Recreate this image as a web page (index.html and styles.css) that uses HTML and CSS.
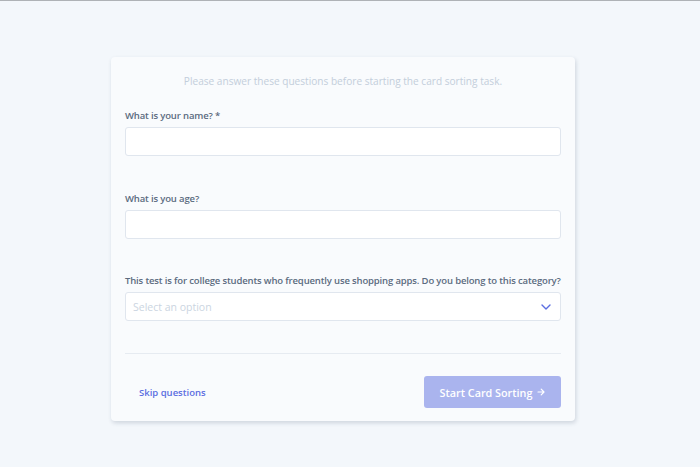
FILE: index.html
```html
<!DOCTYPE html>
<html>
<head>
<meta charset="utf-8">
<link rel="stylesheet" href="styles.css">
</head>
<body>
<div class="topline"></div>
<main class="page">
  <section class="card">
    <p class="intro">Please answer these questions before starting the card sorting task.</p>
    <div class="field">
      <label class="label">What is your name? *</label>
      <div class="input"></div>
    </div>
    <div class="field field-mid">
      <label class="label">What is you age?</label>
      <div class="input"></div>
    </div>
    <div class="field field-last">
      <label class="label">This test is for college students who frequently use shopping apps. Do you belong to this category?</label>
      <div class="input select">
        <span class="placeholder">Select an option</span>
        <svg class="chev" width="10" height="6" viewBox="0 0 10 6"><path d="M1 1l4 4 4-4" fill="none" stroke="#5b6ee1" stroke-width="1.4" stroke-linecap="round" stroke-linejoin="round"/></svg>
      </div>
    </div>
    <div class="divider"></div>
    <div class="actions">
      <a class="skip">Skip questions</a>
      <button class="start">Start Card Sorting <svg class="arrow" width="8" height="8" viewBox="0 0 8 8"><path d="M1 4h6M4.2 1.2L7 4 4.2 6.8" fill="none" stroke="#ffffff" stroke-width="1.2" stroke-linecap="round" stroke-linejoin="round"/></svg></button>
    </div>
  </section>
</main>
</body>
</html>
```
FILE: styles.css
```css
html, body {
  margin: 0;
  padding: 0;
}
body {
  background: #f3f7fb;
  font-family: "Open Sans", "Noto Sans", sans-serif;
  height: 467px;
  overflow: hidden;
}
.topline {
  height: 1px;
  background: #aeb2b6;
}
.page {
  display: flex;
  justify-content: center;
  padding-top: 56px;
  padding-right: 14px;
}
.card {
  width: 436px;
  padding: 0 14px 13px;
  background: #f9fbfd;
  border-radius: 4px;
  box-shadow: 1px 2px 4px rgba(40, 60, 90, 0.18);
}
.intro {
  margin: 17px 0 20px;
  text-align: center;
  font-size: 10.1px;
  line-height: 14px;
  color: #c3cedb;
}
.field {
  display: flex;
  flex-direction: column;
  gap: 4px;
  margin-bottom: 35px;
}
.field-mid {
  margin-bottom: 34px;
}
.field-last {
  margin-bottom: 32px;
}
.label {
  font-size: 9.5px;
  letter-spacing: -0.15px;
  white-space: nowrap;
  line-height: 15px;
  font-weight: 600;
  color: #5b6b80;
}
.input {
  height: 27px;
  background: #ffffff;
  border: 1px solid #e0e6ee;
  border-radius: 3px;
}
.select {
  display: flex;
  align-items: center;
  justify-content: space-between;
  padding: 0 9px 0 7px;
}
.placeholder {
  font-size: 10.5px;
  color: #cbd5e1;
}
.divider {
  height: 1px;
  background: #e6ebf1;
}
.actions {
  display: flex;
  justify-content: space-between;
  align-items: center;
  margin-top: 22px;
}
.skip {
  margin-left: 14px;
  font-size: 9.5px;
  font-weight: 600;
  color: #5b6ee1;
}
.start {
  display: flex;
  align-items: center;
  justify-content: center;
  gap: 5px;
  width: 137px;
  height: 32px;
  border: none;
  border-radius: 3px;
  background: #aab4ee;
  color: #ffffff;
  font-family: "Open Sans", "Noto Sans", sans-serif;
  font-size: 10.8px;
  font-weight: 600;
  padding: 0;
}
```
